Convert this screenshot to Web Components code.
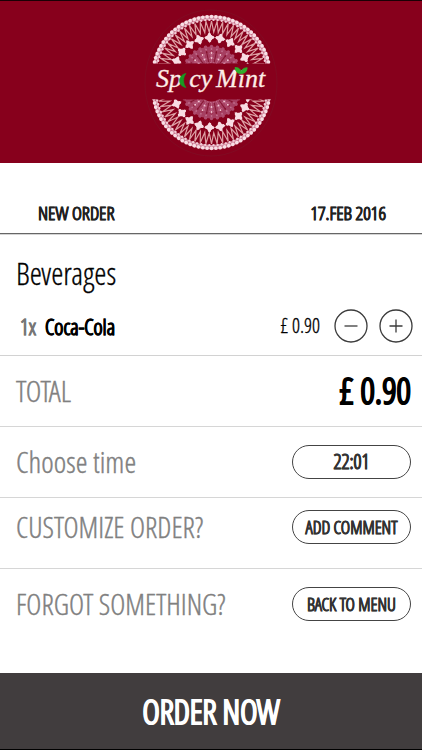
<!DOCTYPE html>
<html lang="en">
<head>
<meta charset="utf-8">
<meta name="viewport" content="width=device-width, initial-scale=1">
<title>Spicy Mint – New order</title>
<style>
  body { margin: 0; background: #fff; font-family: "Open Sans Condensed Light", "Roboto Condensed", sans-serif; }
</style>
</head>
<body>
<order-page></order-page>

<template id="page-template">
  <style>
    :host { display: flex; flex-direction: column; min-height: 100vh; box-sizing: border-box; border-top: 1px solid #1a0005; border-bottom: 1px solid #000; color: #000; }
    main { flex: 1; display: flex; flex-direction: column; }
  </style>
  <brand-header></brand-header>
  <main>
    <order-heading><span slot="title">NEW ORDER</span><time slot="date" datetime="2016-02-17">17.FEB 2016</time></order-heading>
    <order-section heading="Beverages">
      <order-item quantity="1" name="Coca-Cola" price="0.90"></order-item>
    </order-section>
    <summary-row>TOTAL<total-price slot="end">£ 0.90</total-price></summary-row>
    <summary-row>Choose time<pill-button class="time" slot="end">22:01</pill-button></summary-row>
    <summary-row class="upper">CUSTOMIZE ORDER?<pill-button slot="end">ADD COMMENT</pill-button></summary-row>
    <summary-row class="last">FORGOT SOMETHING?<pill-button slot="end">BACK TO MENU</pill-button></summary-row>
  </main>
  <order-now>ORDER NOW</order-now>
</template>

<template id="header-template">
  <style>
    :host { display: flex; justify-content: center; background: #87001c; }
    svg { display: block; width: 142px; height: 162px; }
    text { font-family: "Liberation Serif", serif; font-style: italic; font-size: 26px; fill: #fdece6; stroke: #fdece6; stroke-width: .3; }
    .hidden-letter { fill: none; stroke: none; }
  </style>
  <svg viewBox="0 1 142 162" role="img" aria-label="Spicy Mint">
    <defs>
      <clipPath id="top"><rect x="0" y="0" width="142" height="63.5"/></clipPath>
      <clipPath id="bottom"><rect x="0" y="99.5" width="142" height="64"/></clipPath>
      <g id="lace"></g>
    </defs>
    <ellipse cx="71" cy="83" rx="66" ry="73" fill="none" stroke="#7b1428" stroke-width="1" opacity=".55"/>
    <g clip-path="url(#top)"><use href="#lace" transform="translate(71.5 75)"/></g>
    <g clip-path="url(#bottom)"><use href="#lace" transform="translate(71.5 90) scale(1 -1)"/></g>
    <text x="16" y="87">Sp<tspan class="hidden-letter">i</tspan>cy</text>
    <text x="76" y="87">Mint</text>
    <path d="M46 73.500c-3.500.5-6.500 3.500-6.500 7s2.500 6.300 6.500 7c-1.600-2-2.400-4.300-2.400-7 0-2.800.9-5 2.400-7z" fill="#189a22" stroke="#189a22" stroke-width=".6"/>
    <path d="M101.500 73.500c-3.800.2-6-1.700-6.500-6 3.700 0 6.100 1.700 6.500 6zm0 0c-.3-3.800 1.500-5.600 5.700-5.800-.3 3.600-2 5.600-5.700 5.800z" fill="#2fae2a" stroke="#2fae2a" stroke-width=".8"/>
  </svg>
</template>

<template id="heading-template">
  <style>
    :host { display: flex; justify-content: space-between; align-items: center; height: 71px; padding: 30px 36px 0 38px; box-sizing: border-box; border-bottom: 1px solid #666; box-shadow: 0 1px 0 #d4d4d4; color: #222; font-size: 19px; line-height: 20px; font-weight: 700; -webkit-text-stroke: .3px currentColor; }
    h1 { margin: 0; font: inherit; }
  </style>
  <h1><slot name="title"></slot></h1><slot name="date"></slot>
</template>

<template id="section-template">
  <style>
    :host { display: block; padding: 23px 9px 12px 16px; border-bottom: 1px solid #d2d2d2; }
    h2 { margin: 0 0 20px; font-size: 31px; line-height: 32px; font-weight: 400; -webkit-text-stroke: .3px currentColor; }
  </style>
  <h2></h2><slot></slot>
</template>

<template id="item-template">
  <style>
    :host { display: flex; align-items: center; font-size: 22px; line-height: 24px; }
    .quantity { color: #777; padding: 0 9px 0 4px; font-weight: 700; -webkit-text-stroke: .3px currentColor; }
    .name { flex: 1; font-weight: 700; -webkit-text-stroke: .4px currentColor; }
    .price { margin-right: 14px; font-size: 20px; -webkit-text-stroke: .3px currentColor; }
    round-button + round-button { margin-left: 11px; }
  </style>
  <span class="quantity"></span><span class="name"></span><span class="price"></span>
  <round-button kind="minus"></round-button><round-button kind="plus"></round-button>
</template>

<template id="round-template">
  <style>
    :host { display: block; }
    button { display: block; padding: 0; border: 0; background: none; color: #3b3b3b; cursor: pointer; }
    svg { display: block; width: 34px; height: 34px; fill: none; stroke: currentColor; stroke-width: 1.300; }
  </style>
  <button type="button"><svg viewBox="0 0 34 34" aria-hidden="true"><circle cx="17" cy="17" r="16"/><path/></svg></button>
</template>

<template id="row-template">
  <style>
    :host { display: flex; justify-content: space-between; align-items: center; min-height: 71px; padding: 0 11px 0 16px; box-sizing: border-box; border-bottom: 1px solid #d6d6d6; color: #808080; font-size: 30px; line-height: 36px; }
    :host(.upper) { padding-bottom: 13px; font-size: 29px; }
    :host(.last) { flex: 1; border-bottom: 0; padding-bottom: 34px; font-size: 29px; }
    span { -webkit-text-stroke: .4px currentColor; }
  </style>
  <span><slot></slot></span><slot name="end"></slot>
</template>

<template id="pill-template">
  <style>
    :host { display: block; font-size: 18px; }
    :host(.time) { font-size: 20px; }
    button { display: block; width: 119px; height: 34px; padding: 0; border: 1px solid #444; border-radius: 17px; background: none; color: #333; font: inherit; line-height: 24px; font-weight: 700; -webkit-text-stroke: .3px currentColor; cursor: pointer; }
  </style>
  <button type="button"><slot></slot></button>
</template>

<template id="total-template">
  <style>:host { display: block; color: #000; font-size: 36px; line-height: 40px; font-weight: 700; -webkit-text-stroke: 1px currentColor; }</style>
  <slot></slot>
</template>

<template id="order-now-template">
  <style>
    :host { display: block; }
    button { display: block; width: 100%; height: 76px; padding: 2px 0 0; border: 0; background: #413d3e; color: #fff; font: inherit; font-size: 33px; line-height: 40px; font-weight: 700; -webkit-text-stroke: 1px currentColor; cursor: pointer; }
  </style>
  <button type="button"><slot></slot></button>
</template>

<script>
  class TemplateElement extends HTMLElement {
    constructor() {
      super();
      this.attachShadow({ mode: 'open' })
        .append(document.getElementById(this.constructor.template).content.cloneNode(true));
    }
    find(selector) { return this.shadowRoot.querySelector(selector); }
  }

  class BrandHeader extends TemplateElement {
    static template = 'header-template';
    connectedCallback() { this.find('#lace').innerHTML = this.lace(); }

    at(radius, degrees) {
      const a = degrees * Math.PI / 180;
      return (Math.sin(a) * radius).toFixed(2) + ' ' + (-Math.cos(a) * radius).toFixed(2);
    }

    ring(radius, count, draw, offset = 0) {
      let out = '';
      for (let i = 0; i < count; i++) {
        const deg = i * 360 / count + offset;
        out += `<g transform="rotate(${deg.toFixed(2)}) translate(0 ${-radius})">${draw}</g>`;
      }
      return out;
    }

    lace() {
      let zigzag = '';
      const spikes = 60;
      for (let i = 0; i < spikes; i++) {
        const d = i * 360 / spikes;
        zigzag += (i ? 'L' : 'M') + this.at(54, d) + 'L' + this.at(43, d + 180 / spikes);
      }
      const star = '<g fill="#f8dce3"><circle cy="-2.900" r="1.700"/><circle cy="2.900" r="1.700"/><circle cx="-2.900" r="1.700"/><circle cx="2.900" r="1.700"/><path d="M0-5.500L1.500-2.500H2.500V-1.500L5.500 0 2.500 1.500V2.500H1.500L0 5.500-1.500 2.500H-2.500V1.500L-5.500 0-2.500-1.500V-2.500H-1.500z"/></g>';
      return `
        <circle r="57.200" fill="none" stroke="#d591a5" stroke-width="4.500"/>
        ${this.ring(58.400, 84, '<circle r="1.800" fill="#f8dfe5"/>')}
        ${this.ring(55.200, 84, '<circle r="1.200" fill="#f3cdd7"/>', 2.100)}
        ${this.ring(57, 84, '<circle r=".5" fill="#b85a74"/>', 2.100)}
        <path d="${zigzag}z" fill="none" stroke="#dda0a4" stroke-width="1.200"/>
        ${this.ring(37.500, 22, star, -3)}
        <circle r="20" fill="none" stroke="#a63f61" stroke-width="17"/>
        ${this.ring(28.500, 30, '<circle r="1.700" fill="#ae4c6e"/>')}
        ${this.ring(26, 30, '<circle r=".9" fill="#c2708e"/><circle cy="2.600" r=".8" fill="#870825"/>')}
        ${this.ring(19, 15, '<path d="M0-5V6M-2.500-3L2.500 3M2.500-3L-2.500 3" stroke="#bd6384" stroke-width=".8"/><circle cy="-3" r=".9" fill="#f4c7d4"/><circle cy="2" r=".9" fill="#f4c7d4"/>')}
        ${this.ring(19, 15, '<path d="M0-5V6" stroke="#861632" stroke-width="1"/>', 12)}
        <circle r="12.500" fill="none" stroke="#c87290" stroke-width="1" stroke-dasharray="1.500 1.500"/>`;
    }
  }

  class OrderHeading extends TemplateElement { static template = 'heading-template'; }
  class SummaryRow extends TemplateElement { static template = 'row-template'; }
  class PillButton extends TemplateElement { static template = 'pill-template'; }
  class TotalPrice extends TemplateElement { static template = 'total-template'; }
  class OrderNow extends TemplateElement { static template = 'order-now-template'; }
  class OrderPage extends TemplateElement { static template = 'page-template'; }

  class OrderSection extends TemplateElement {
    static template = 'section-template';
    connectedCallback() { this.find('h2').textContent = this.getAttribute('heading'); }
  }

  class OrderItem extends TemplateElement {
    static template = 'item-template';
    connectedCallback() {
      this.find('.quantity').textContent = this.getAttribute('quantity') + 'x';
      this.find('.name').textContent = this.getAttribute('name');
      this.find('.price').textContent = '£ ' + this.getAttribute('price');
    }
  }

  class RoundButton extends TemplateElement {
    static template = 'round-template';
    connectedCallback() {
      const plus = this.getAttribute('kind') === 'plus';
      this.find('button').setAttribute('aria-label', plus ? 'Add one' : 'Remove one');
      this.find('path').setAttribute('d', plus ? 'M10.500 17h13M17 10.500v13' : 'M10.500 17h13');
    }
  }

  customElements.define('brand-header', BrandHeader);
  customElements.define('order-heading', OrderHeading);
  customElements.define('round-button', RoundButton);
  customElements.define('order-item', OrderItem);
  customElements.define('order-section', OrderSection);
  customElements.define('total-price', TotalPrice);
  customElements.define('pill-button', PillButton);
  customElements.define('summary-row', SummaryRow);
  customElements.define('order-now', OrderNow);
  customElements.define('order-page', OrderPage);
</script>
</body>
</html>
